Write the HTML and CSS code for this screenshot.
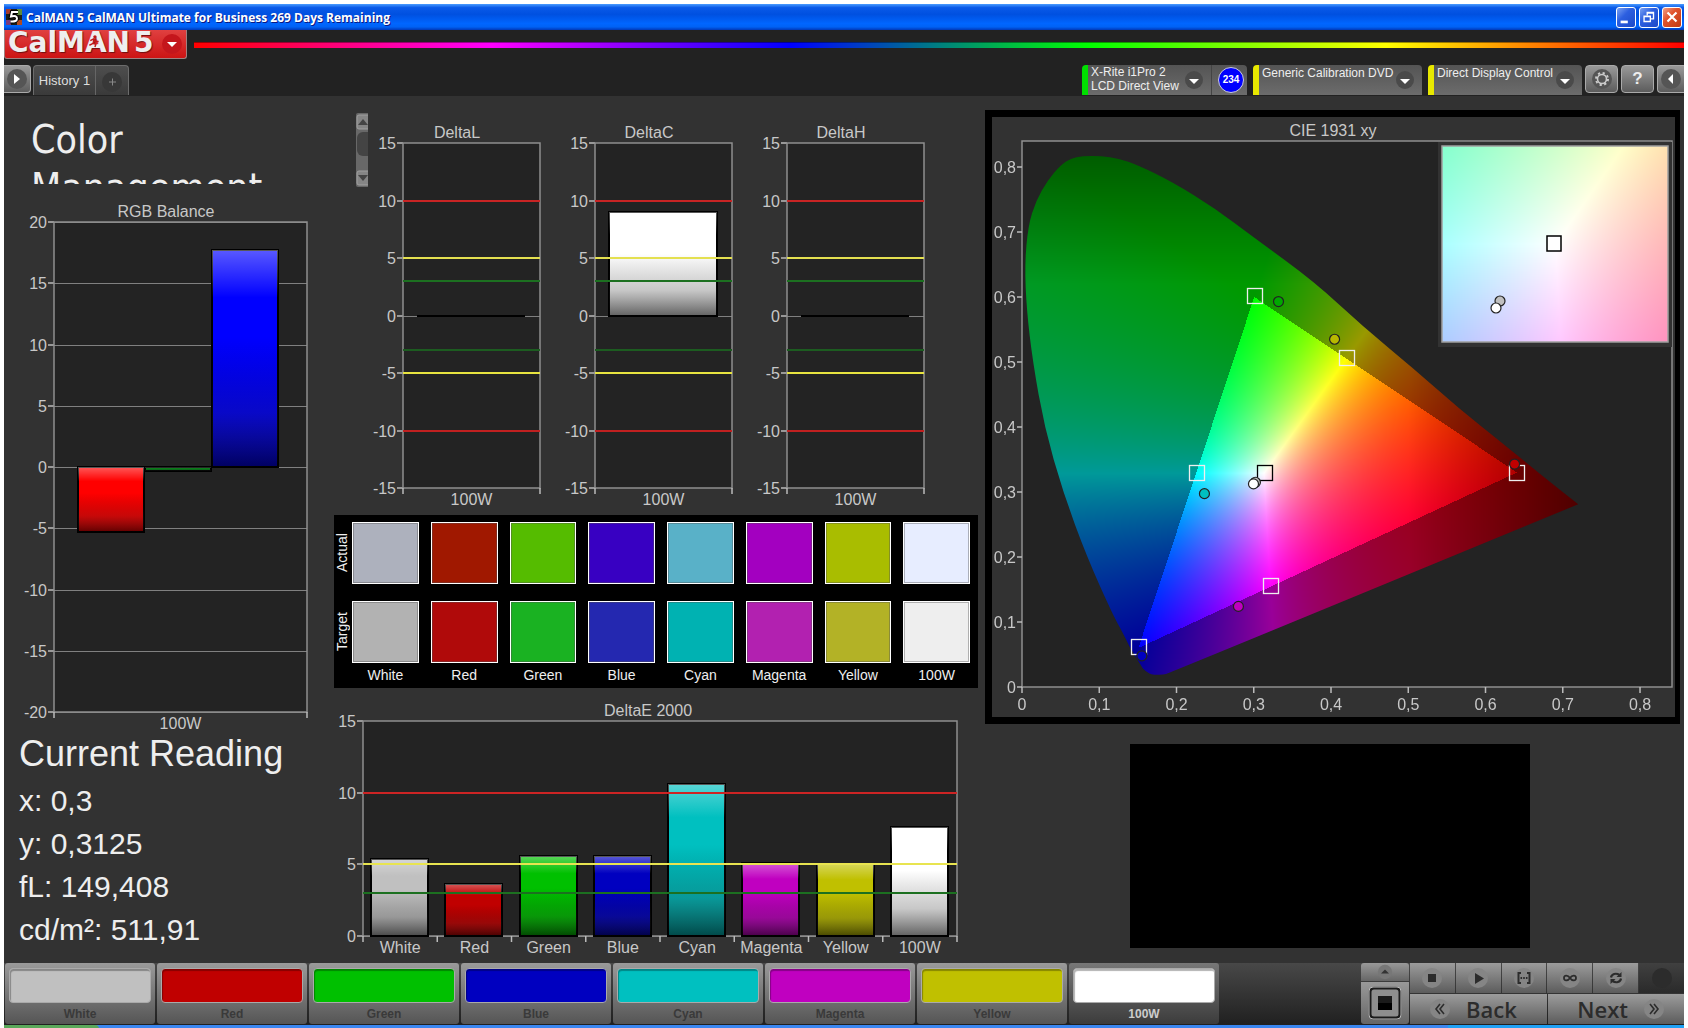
FILE: index.html
```html
<!DOCTYPE html>
<html lang="en">
<head>
    <meta charset="UTF-8">
    <meta name="viewport" content="width=device-width, initial-scale=1.0">
    <title>CalMAN 5</title>
    <link rel="stylesheet" href="styles.css">
</head>
<body>

    <div class="titlebar">
        <svg class="app-icon" viewBox="0 0 16 16">
            <rect width="16" height="16" fill="#1c1c14"/>
            <path d="M0 0h5v5H0z" fill="#a33a2a"/><path d="M11 0h5v6h-5z" fill="#5d8a3a"/>
            <path d="M0 11h5v5H0z" fill="#7a3a7a"/><path d="M11 11h5v5h-5z" fill="#b04a20"/>
            <path d="M12 3H6L5 7.500q6-1.500 6 2 0 3.500-6.500 3" fill="none" stroke="#000" stroke-width="4"/>
            <path d="M12 3H6L5 7.500q6-1.500 6 2 0 3.500-6.500 3" fill="none" stroke="#fff" stroke-width="2"/>
        </svg>
        <span class="title">CalMAN 5 CalMAN Ultimate for Business 269 Days Remaining</span>
        <button class="win-btn" aria-label="Minimize"><svg viewBox="0 0 20 20"><path d="M4 14h8v3H4z" fill="#fff"/></svg></button>
        <button class="win-btn" aria-label="Restore"><svg viewBox="0 0 20 20"><path d="M8 8V5h7v7h-3M8 5.500h7M4.500 9h7v6h-7zM4.500 9.500h7" fill="none" stroke="#fff" stroke-width="1.500"/></svg></button>
        <button class="win-btn close" aria-label="Close"><svg viewBox="0 0 20 20"><path d="M5 5l10 10M15 5L5 15" stroke="#fff" stroke-width="2.400"/></svg></button>
    </div>

    <header class="header">
        <div class="brand-row">
            <button class="logo">
                <span>CalMAN</span><span>5</span>
                <svg class="runner" viewBox="0 0 12 14"><circle cx="7" cy="2" r="1.800" fill="#c01818"/><path d="M2 6l4-2 2 3 3 0M6 5L5 9l3 1-1 3M5 9l-4 2" fill="none" stroke="#c01818" stroke-width="1.600"/></svg>
                <svg class="drop" viewBox="0 0 20 20"><circle cx="10" cy="10" r="10" fill="#c4161c"/><path d="M5 8h10l-5 5z" fill="#fff"/></svg>
            </button>
            <div class="spectrum"></div>
        </div>
        <div class="tab-row">
            <button class="square-btn left" aria-label="Expand"><svg viewBox="0 0 20 20"><circle cx="10" cy="10" r="10" fill="#555"/><path d="M7 5l6 5-6 5z" fill="#fff"/></svg></button>
            <div class="tabs">
                <button class="tab">History 1</button>
                <button class="tab add" aria-label="Add history"><svg viewBox="0 0 20 20"><circle cx="10" cy="10" r="10" fill="#383838"/><path d="M7 10h7M10.500 6.500v7" stroke="#888"/></svg></button>
            </div>
            <div class="device meter">
                <button class="device-name">X-Rite i1Pro 2<br>LCD Direct View
                    <svg viewBox="0 0 18 18"><circle cx="9" cy="9" r="9" fill="#4a4a4a"/><path d="M4 8h10l-5 5z" fill="#fff"/></svg></button>
                <span class="count">234</span>
            </div>
            <div class="device source">
                <button class="device-name">Generic Calibration DVD
                    <svg viewBox="0 0 18 18"><circle cx="9" cy="9" r="9" fill="#4a4a4a"/><path d="M4 8h10l-5 5z" fill="#fff"/></svg></button>
            </div>
            <div class="device display">
                <button class="device-name">Direct Display Control
                    <svg viewBox="0 0 18 18"><circle cx="9" cy="9" r="9" fill="#4a4a4a"/><path d="M4 8h10l-5 5z" fill="#fff"/></svg></button>
            </div>
            <button class="square-btn" aria-label="Settings"><svg viewBox="0 0 20 20"><circle cx="10" cy="10" r="10" fill="#555"/><circle cx="10" cy="10" r="4.500" fill="none" stroke="#ccc" stroke-width="1.600"/><circle cx="10" cy="10" r="6" fill="none" stroke="#ccc" stroke-width="2" stroke-dasharray="2.200 2.500"/></svg></button>
            <button class="square-btn help" aria-label="Help">?</button>
            <button class="square-btn right" aria-label="Collapse"><svg viewBox="0 0 20 20"><circle cx="10" cy="10" r="10" fill="#555"/><path d="M12 5l-5 5 5 5z" fill="#fff"/></svg></button>
        </div>
    </header>

    <main class="workspace">
        <section class="col-left">
            <h1 class="page-title">Color Management</h1>
            <svg class="chart" id="rgbBalance" viewBox="0 0 330 547"></svg>
            <div class="reading">
                <h2>Current Reading</h2>
                <p>x: 0,3</p>
                <p>y: 0,3125</p>
                <p>fL: 149,408</p>
                <p>cd/m²: 511,91</p>
            </div>
        </section>

        <section class="col-center">
            <div class="delta-row">
                <svg class="scrollbar" viewBox="0 0 12 74">
                    <rect width="16" height="74" rx="2" fill="#686868"/>
                    <rect x="1" y="2" width="14" height="14" rx="2" fill="#858585" stroke="#a0a0a0"/>
                    <path d="M2 12l5-6 5 6z" fill="#444"/>
                    <rect x="1" y="19" width="16" height="24" rx="6" fill="#444"/>
                    <rect x="1" y="58" width="14" height="14" rx="2" fill="#858585" stroke="#a0a0a0"/>
                    <path d="M2 62l5 6 5-6z" fill="#444"/>
                </svg>
                <svg class="chart" id="deltaL" viewBox="0 0 192 402"></svg>
                <svg class="chart" id="deltaC" viewBox="0 0 192 402"></svg>
                <svg class="chart" id="deltaH" viewBox="0 0 192 402"></svg>
            </div>

            <div class="swatches">
                <div class="swatch-row">
                    <span class="side">Actual</span>
                    <i style="background:#adb1bd"></i><i style="background:#a01800"></i><i style="background:#55bc00"></i><i style="background:#3800c2"></i>
                    <i style="background:#59b1c8"></i><i style="background:#a300c0"></i><i style="background:#a9bd00"></i><i style="background:#e7edff"></i>
                </div>
                <div class="swatch-row">
                    <span class="side">Target</span>
                    <i style="background:#b2b2b2"></i><i style="background:#b00a0a"></i><i style="background:#1ab222"></i><i style="background:#2428b0"></i>
                    <i style="background:#00b2b2"></i><i style="background:#b221b0"></i><i style="background:#b3b226"></i><i style="background:#eee"></i>
                </div>
                <div class="swatch-names">
                    <span></span><span>White</span><span>Red</span><span>Green</span><span>Blue</span><span>Cyan</span><span>Magenta</span><span>Yellow</span><span>100W</span>
                </div>
            </div>

            <svg class="chart delta-e" id="deltaE" viewBox="0 0 644 275"></svg>
        </section>

        <section class="col-right">
            <div class="cie-panel">
                <svg class="chart" viewBox="0 0 683 600">
                    <text x="341" y="19" text-anchor="middle">CIE 1931 xy</text>
                    <rect x="30" y="24" width="650" height="546" fill="#232323"/>
                    <foreignObject x="30" y="24" width="650" height="546"><canvas id="locus" width="650" height="546"></canvas></foreignObject>
                    <rect x="30" y="24" width="650" height="546" class="frame"/>
                    <g id="ciePlot"></g>
                    <rect x="446" y="25" width="234" height="205" fill="#323232"/>
                    <foreignObject x="450" y="29" width="226" height="196"><canvas id="inset" width="226" height="196"></canvas></foreignObject>
                    <rect x="450" y="29" width="226" height="196" fill="none" stroke="#a0a0a0" stroke-width="1.500"/>
                    <rect x="555" y="119" width="14" height="15" fill="#fff" stroke="#000" stroke-width="1.500"/>
                    <circle cx="508" cy="184" r="5" fill="#c0c0c0" stroke="#222" stroke-width="1.200"/>
                    <circle cx="504" cy="191" r="5" fill="#fff" stroke="#222" stroke-width="1.200"/>
                </svg>
            </div>
            <div class="preview"></div>
        </section>
    </main>

    <footer class="footer">
        <div class="patches">
            <button class="patch"><i style="background:#c0c0c0"></i>White</button>
            <button class="patch"><i style="background:#c00000"></i>Red</button>
            <button class="patch"><i style="background:#00c000"></i>Green</button>
            <button class="patch"><i style="background:#0000c0"></i>Blue</button>
            <button class="patch"><i style="background:#00c0c0"></i>Cyan</button>
            <button class="patch"><i style="background:#c000c0"></i>Magenta</button>
            <button class="patch"><i style="background:#c0c000"></i>Yellow</button>
            <button class="patch active"><i style="background:#fff"></i>100W</button>
        </div>
        <div class="window-ctl">
            <button class="up" aria-label="Show"><svg viewBox="0 0 20 20"><circle cx="10" cy="10" r="9" fill="#777"/><path d="M5 12l5-5 5 5z" fill="#333"/></svg></button>
            <button class="big" aria-label="Pattern window"><svg viewBox="0 0 34 34"><rect x="2" y="2" width="30" height="30" rx="4" fill="#8e8e8e" stroke="#1c1c1c" stroke-width="3"/><rect x="1" y="1" width="32" height="32" rx="4" fill="none" stroke="#bbb" stroke-width="1"/><rect x="10" y="10" width="14" height="7" fill="#1a1a1a"/><rect x="10" y="17" width="14" height="7" fill="#000"/></svg></button>
        </div>
        <div class="controls">
            <div class="small">
                <button aria-label="Stop"><svg viewBox="0 0 20 20"><circle cx="10" cy="10" r="10"/><path d="M6 6h8v8H6z" fill="#2c2c2c"/></svg></button>
                <button aria-label="Read"><svg viewBox="0 0 20 20"><circle cx="10" cy="10" r="10"/><path d="M7 5l9 5.500L7 16z" fill="#2c2c2c"/></svg></button>
                <button aria-label="Read series"><svg viewBox="0 0 20 20"><circle cx="10" cy="10" r="10"/><path d="M7 5H4.500v10H7M13 5h2.500v10H13" fill="none" stroke="#2c2c2c" stroke-width="2"/><path d="M6.500 10h7" stroke="#2c2c2c" stroke-width="2" stroke-dasharray="1.600 1.100"/></svg></button>
                <button aria-label="Read continuous"><svg viewBox="0 0 20 20"><circle cx="10" cy="10" r="10"/><path d="M10 10c-2-3-6-3.500-6 0s4 3 6 0 6-3.500 6 0-4 3-6 0z" fill="none" stroke="#2c2c2c" stroke-width="1.800"/></svg></button>
                <button aria-label="Refresh"><svg viewBox="0 0 20 20"><circle cx="10" cy="10" r="10"/><path d="M5 9.500C5.500 6 10 4.500 13.500 7M15 10.500C14.500 14 10 15.500 6.500 13" fill="none" stroke="#2c2c2c" stroke-width="2.200"/><path d="M15.500 4v5h-5zM4.500 16v-5h5z" fill="#2c2c2c"/></svg></button>
                <button class="off" aria-label="Record"><svg viewBox="0 0 20 20"><circle cx="10" cy="10" r="10"/></svg></button>
            </div>
            <div class="nav">
                <button><svg viewBox="0 0 20 20"><circle cx="10" cy="10" r="10"/><path d="M10 5l-4 5 4 5M14 5l-4 5 4 5" fill="none" stroke="#2c2c2c" stroke-width="1.600"/></svg>Back</button>
                <button class="next">Next<svg viewBox="0 0 20 20"><circle cx="10" cy="10" r="10"/><path d="M6 5l4 5-4 5M10 5l4 5-4 5" fill="none" stroke="#2c2c2c" stroke-width="1.600"/></svg></button>
            </div>
        </div>
    </footer>
    <div class="taskbar"><span class="start"></span><span class="tray"></span></div>

    <svg class="defs" width="0" height="0">
        <linearGradient id="shade" x1="0" y1="0" x2="0" y2="1">
            <stop offset="0" stop-color="#fff" stop-opacity=".35"/>
            <stop offset=".22" stop-color="#fff" stop-opacity="0"/>
            <stop offset=".4" stop-color="#000" stop-opacity="0"/>
            <stop offset=".75" stop-color="#222" stop-opacity=".25"/>
            <stop offset="1" stop-color="#000" stop-opacity=".62"/>
        </linearGradient>
    </svg>

    <script src="script.js"></script>
</body>
</html>
```
FILE: styles.css
```css
* {
    box-sizing: border-box;
}
body {
    margin: 0;
    padding: 4px 4px 0;
    min-height: 100vh;
    display: flex;
    flex-direction: column;
    background-color: #fff;
    font-family: "Liberation Sans", Arial, sans-serif;
    color: #eee;
}
button {
    border: none;
    padding: 0;
    margin: 0;
    color: inherit;
    font-family: inherit;
    cursor: pointer;
}
svg {
    display: block;
}
.defs {
    position: absolute;
}

/* title bar */
.titlebar {
    display: flex;
    align-items: center;
    gap: 3px;
    height: 26px;
    padding: 0 2px;
    background: linear-gradient(#4a9cff, #0a5ae8 14%, #0050e0 40%, #0066ff 75%, #0062f5 88%, #0038b8);
}
.app-icon {
    width: 16px;
    height: 16px;
}
.title {
    flex: 1;
    padding-left: 1px;
    font: bold 12px "Open Sans", sans-serif;
    color: #fff;
    text-shadow: 1px 1px 0 #0a1883;
    white-space: nowrap;
}
.win-btn {
    width: 20px;
    height: 21px;
    border: 1px solid #fff;
    border-radius: 3px;
    background: linear-gradient(135deg, #7ba2f2, #2c5fe0 40%, #1c49c8);
}
.win-btn.close {
    background: linear-gradient(135deg, #f0a088, #e0522c 40%, #c03a14);
}

/* header */
.header {
    background-color: #222;
}
.brand-row {
    display: flex;
    gap: 7px;
    height: 35px;
}
.logo {
    position: relative;
    display: flex;
    gap: 4px;
    width: 183px;
    height: 29px;
    padding-left: 3px;
    overflow: hidden;
    border: 1px solid #a08080;
    border-top: none;
    border-radius: 0 0 3px 3px;
    background: linear-gradient(#e04040, #cc1414);
    font: bold 28px/26px "DejaVu Sans", sans-serif;
    color: #eee;
    text-shadow: 1px 1px 1px #701010;
}
.runner {
    position: absolute;
    left: 83px;
    top: 5px;
    width: 12px;
    height: 13px;
}
.drop {
    width: 20px;
    height: 20px;
    margin: 4px 0 0 4px;
}
.spectrum {
    flex: 1;
    height: 6px;
    margin-top: 12px;
    background: linear-gradient(to right, #f00, #f0f 20%, #00f 40%, #0f0 60%, #ff0 80%, #f00);
    border-top: 1px solid rgba(0, 0, 0, .4);
}
.tab-row {
    display: flex;
    height: 31px;
}
.square-btn {
    display: flex;
    align-items: center;
    justify-content: center;
    width: 33px;
    height: 28px;
    margin-left: 3px;
    border: 1px solid #aaa;
    border-radius: 4px;
    background: linear-gradient(#999, #5c5c5c);
}
.square-btn svg {
    width: 20px;
    height: 20px;
}
.square-btn.left {
    width: 27px;
    margin-left: 0;
    border-left: none;
    border-radius: 0 4px 4px 0;
}
.square-btn.right {
    width: 27px;
    border-right: none;
    border-radius: 4px 0 0 4px;
}
.help {
    font-weight: bold;
    font-size: 17px;
}
.tabs {
    display: flex;
    height: 30px;
    margin: 0 auto 0 2px;
    border: 1px solid #6c6c6c;
    border-bottom: none;
    border-radius: 4px 4px 0 0;
    background: linear-gradient(#4e4e4e, #3a3a3a);
}
.tab {
    width: 62px;
    border-right: 1px solid #666;
    background: none;
    font-size: 13px;
    color: #ddd;
}
.tab.add {
    width: 32px;
    border: none;
}
.tab.add svg {
    width: 20px;
    margin: 3px auto 0;
}
.device {
    display: flex;
    width: 169px;
    height: 30px;
    margin-left: 6px;
    border-left: 6px solid #e8e800;
    border-radius: 4px 4px 0 0;
    background: linear-gradient(#545454, #6c6c6c);
}
.device.meter {
    width: 165px;
    border-left-color: #00e000;
}
.device.display {
    width: 154px;
}
.device-name {
    position: relative;
    flex: 1;
    display: block;
    height: 30px;
    padding: 0 0 2px 3px;
    background: none;
    font-size: 12px;
    line-height: 14px;
    text-align: left;
    white-space: nowrap;
}
.device:not(.meter) .device-name {
    padding-bottom: 15px;
}
.device.meter .device-name {
    border-right: 1px solid #444;
}
.device-name svg {
    position: absolute;
    right: 8px;
    top: 6px;
    width: 18px;
    height: 18px;
}
.count {
    width: 26px;
    height: 26px;
    margin: 2px 3px 0 6px;
    border: 1px solid #ccd;
    border-radius: 50%;
    background-color: #00f;
    font: bold 10px/24px "Liberation Sans", sans-serif;
    text-align: center;
    color: #fff;
}

/* work area */
.workspace {
    flex: 1;
    display: grid;
    grid-template-columns: 330fr 650fr 700fr;
    background-color: #323232;
}
.chart {
    width: 100%;
    font-size: 16px;
    fill: #c8c8c8;
}
.chart .frame {
    fill: none;
    stroke: #8f8f8f;
    stroke-width: 1.5;
}
.chart .tick {
    stroke: #bbb;
    stroke-width: 1.5;
}
.chart .grid {
    stroke: #808080;
}
.page-title {
    height: 68px;
    margin: 20px 0 0;
    padding-left: 27px;
    padding-right: 60px;
    overflow: hidden;
    font: 39px/48px "DejaVu Sans Condensed", "DejaVu Sans", sans-serif;
    font-stretch: condensed;
}
.reading {
    padding-left: 15px;
}
.reading h2 {
    margin: 0 0 2px;
    font-weight: normal;
    font-size: 36px;
    line-height: 46px;
}
.reading p {
    margin: 0;
    font-size: 30px;
    line-height: 43px;
}
.delta-row {
    display: grid;
    grid-template-columns: 12px 1fr 1fr 1fr;
    padding: 17px 40px 0 22px;
}
.swatches {
    margin-right: 6px;
    padding: 7px 8px 4px 0;
    background-color: #000;
    font-size: 14px;
}
.swatch-row, .swatch-names {
    display: grid;
    grid-template-columns: 6px repeat(8, 1fr);
    gap: 12px;
}
.swatch-row {
    height: 62px;
    margin-bottom: 17px;
}
.swatch-row:nth-child(2) {
    margin-bottom: 3px;
}
.swatch-row i {
    border: 1px solid #fff;
    box-shadow: inset 0 0 0 1px rgba(80, 80, 80, .4);
}
.side {
    writing-mode: vertical-rl;
    transform: rotate(180deg);
    width: 16px;
    text-align: center;
    line-height: 16px;
}
.swatch-names {
    line-height: 18px;
    text-align: center;
}
.delta-e {
    width: calc(100% - 6px);
}
.cie-panel {
    margin: 14px 4px 0 1px;
    border: 7px solid #000;
    border-right-width: 5px;
}
canvas {
    display: block;
    width: 100%;
    height: 100%;
}
.col-right {
    padding-right: 8px;
}
.cie-panel {
    margin-right: -4px;
}
.preview {
    width: 400px;
    height: 204px;
    margin: 20px auto 0;
    background-color: #000;
}

/* footer */
.footer {
    display: flex;
    height: 62px;
    background: linear-gradient(#484848, #202020);
}
.patches {
    flex: 1;
    display: flex;
    gap: 2px;
    padding-left: 1px;
}
.patch {
    display: flex;
    flex-direction: column;
    align-items: center;
    width: 150px;
    height: 61px;
    padding: 5px 4px 0;
    border-radius: 3px;
    background: linear-gradient(#9a9a9a, #555);
    font-weight: bold;
    font-size: 12px;
    line-height: 20px;
    color: #3a3a3a;
}
.patch i {
    width: 100%;
    height: 37px;
    margin-bottom: 1px;
    border: 1px solid #aaa;
    border-radius: 4px;
    box-shadow: inset 1px 2px 1px rgba(0, 0, 0, .3);
}
.patch.active {
    background: linear-gradient(#777, #3c3c3c);
    color: #ccc;
}
.window-ctl {
    width: 48px;
    margin-right: 1px;
}
.window-ctl button {
    display: flex;
    align-items: center;
    justify-content: center;
    width: 100%;
    background: linear-gradient(#999, #666);
}
.window-ctl .up {
    height: 18px;
    margin-bottom: 1px;
    border-radius: 3px 3px 0 0;
}
.up svg {
    width: 16px;
}
.big {
    height: 42px;
    border-radius: 0 0 3px 3px;
}
.big svg {
    width: 34px;
}
.controls {
    width: 274px;
}
.small, .nav {
    display: flex;
    gap: 1px;
    margin-bottom: 1px;
}
.small button, .nav button {
    flex: 1;
    display: flex;
    align-items: center;
    justify-content: center;
    height: 30px;
    background: linear-gradient(#9c9c9c, #5c5c5c);
}
.small svg, .nav svg {
    width: 20px;
    height: 20px;
    fill: #858585;
}
.small .off {
    background: linear-gradient(#404040, #2a2a2a);
}
.small .off svg {
    fill: #2c2c2c;
}
.nav button {
    justify-content: flex-start;
    gap: 16px;
    padding: 0 20px;
    font: 600 22px/28px "Open Sans", sans-serif;
    color: #2c2c2c;
}
.nav .next {
    justify-content: flex-end;
}
.taskbar {
    display: flex;
    justify-content: space-between;
    height: 4px;
    background-color: #3a86f0;
}
.start {
    width: 95px;
    background-color: #5aa85a;
    border-radius: 0 4px 0 0;
}
.tray {
    width: 236px;
    background-color: #1fa0f4;
}
```
FILE: script.js
```js
function tag(name, attrs, text) {
    var s = '<' + name;
    for (var k in attrs) s += ' ' + k + '="' + attrs[k] + '"';
    return s + '>' + (text === undefined ? '' : text) + '</' + name + '>';
}

function line(x1, y1, x2, y2, cls) {
    return tag('line', { x1: x1, y1: y1, x2: x2, y2: y2, 'class': cls });
}

// o: box [x, y, w, h], min, max, step, title, titleX, bars, limits, labels
function barChart(id, o) {
    var x = o.box[0], y = o.box[1], w = o.box[2], h = o.box[3];
    var out = tag('rect', { x: x, y: y, width: w, height: h, fill: '#232323' });
    function py(v) { return Math.round(y + h * (o.max - v) / (o.max - o.min)); }

    for (var v = o.min; v <= o.max; v += o.step) {
        if (o.grid || v === 0) out += line(x, py(v) + 0.5, x + w, py(v) + 0.5, 'grid');
        out += line(x - 6, py(v), x, py(v), 'tick');
        out += tag('text', { x: x - 7, y: py(v) + 6, 'text-anchor': 'end' }, v);
    }
    out += tag('rect', { x: x, y: y, width: w, height: h, 'class': 'frame' });

    o.bars.forEach(function (b) {
        // an empty bar still shows as a thin black line on the axis
        if (b.v === 0) {
            out += tag('line', { x1: x + b.x, y1: py(0), x2: x + b.x + b.w, y2: py(0), stroke: '#000', 'stroke-width': 2 });
            return;
        }
        var r = { x: x + b.x, y: Math.min(py(b.v), py(0)), width: b.w, height: Math.abs(py(b.v) - py(0)), fill: b.c, stroke: '#000', 'stroke-width': 2 };
        out += tag('rect', r);
        r.fill = 'url(#shade)';
        r.stroke = 'none';
        out += tag('rect', r);
    });

    (o.limits || []).forEach(function (l) {
        out += tag('line', { x1: x, y1: py(l[0]), x2: x + w, y2: py(l[0]), stroke: l[1], 'stroke-width': 2 });
    });

    var n = o.labels.length;
    for (var i = 0; i <= n; i++) {
        out += line(x + w * i / n, y + h, x + w * i / n, y + h + 6, 'tick');
        if (i < n) out += tag('text', { x: x + w * (i + 0.5) / n, y: y + h + 17, 'text-anchor': 'middle' }, o.labels[i]);
    }
    out += tag('text', { x: o.titleX, y: y - 5, 'text-anchor': 'middle' }, o.title);
    document.getElementById(id).innerHTML = out;
}

barChart('rgbBalance', {
    box: [50, 38, 253, 490], min: -20, max: 20, step: 5, grid: true,
    title: 'RGB Balance', titleX: 162, labels: ['100W'],
    bars: [
        { x: 24, w: 66, v: -5.3, c: '#f00' },
        { x: 91, w: 66, v: -0.3, c: '#0c7c1c' },
        { x: 158, w: 66, v: 17.7, c: '#00f' }
    ]
});

var deltaLimits = [[10, '#c82424'], [5, '#e4e050'], [3, '#1c7020'], [-3, '#1c5c20'], [-5, '#e8e440'], [-10, '#c02020']];
[['deltaL', 'DeltaL', 0], ['deltaC', 'DeltaC', 9], ['deltaH', 'DeltaH', 0]].forEach(function (d) {
    barChart(d[0], {
        box: [35, 30, 137, 345], min: -15, max: 15, step: 5,
        title: d[1], titleX: 89, labels: ['100W'], limits: deltaLimits,
        bars: [{ x: 14, w: 108, v: d[2], c: '#fff' }]
    });
});

var names = ['White', 'Red', 'Green', 'Blue', 'Cyan', 'Magenta', 'Yellow', '100W'];
var colors = ['#c0c0c0', '#c00000', '#00c000', '#0000c0', '#00c0c0', '#c000c0', '#c0c000', '#fff'];
var deltaE = [5.35, 3.65, 5.55, 5.55, 10.6, 5.12, 5.05, 7.6];
barChart('deltaE', {
    box: [29, 33, 594, 215], min: 0, max: 15, step: 5,
    title: 'DeltaE 2000', titleX: 314, labels: names,
    limits: [[10, '#cc2424'], [5, '#e8e450'], [3, '#1c7020']],
    bars: deltaE.map(function (v, i) {
        return { x: Math.round(8 + i * 74.25), w: 57, v: v, c: colors[i] };
    })
});

// chromaticity diagram, in xy units
var WX = 0.8414, WY = 0.84;
var locus = [[.150, .036], [.130, .085], [.118, .110], [.084, .2], [.053, .3], [.029, .4], [.014, .5], [.006, .58],
    [.0035, .65], [.008, .71], [.018, .748], [.033, .779], [.050, .803], [.063, .813], [.078, .817], [.103, .817], [.125, .813],
    [.150, .803], [.196, .776], [.249, .737], [.302, .690], [.378, .624], [.442, .554], [.506, .491],
    [.565, .429], [.623, .374], [.670, .328], [.720, .281], [.19, .021], [.183, .019], [.172, .0185], [.163, .021]];

function mix(x, y) {
    var X = x / y, Z = (1 - x - y) / y;
    var c = [3.2406 * X - 1.5372 - 0.4986 * Z, -0.9689 * X + 1.8758 + 0.0415 * Z, 0.0557 * X - 0.204 + 1.057 * Z];
    var m = Math.max(c[0], c[1], c[2]);
    return c.map(function (v) { return 255 * Math.max(v, 0) / m; });
}

function paint(id, x0, x1, y0, y1, dim) {
    var cv = document.getElementById(id), ctx = cv.getContext('2d');
    var img = ctx.createImageData(cv.width, cv.height), p = 0;
    for (var j = 0; j < cv.height; j++) {
        for (var i = 0; i < cv.width; i++) {
            var x = x0 + (x1 - x0) * i / cv.width, y = y1 - (y1 - y0) * (j + 0.5) / cv.height;
            var c = mix(x, y), f = 1;
            if (dim) {
                f -= Math.max(0, x - 0.5) * 2.2 + Math.max(0, y - 0.62) * 2;
                var out = (x - .15) * .54 - (y - .06) * .15 < 0 ||
                    (y - .6) * .34 + (x - .3) * .27 > 0 ||
                    (y - .06) * .49 - (x - .15) * .27 < 0;
                if (out) f *= 0.6;
            }
            img.data[p++] = c[0] * f;
            img.data[p++] = c[1] * f;
            img.data[p++] = c[2] * f;
            img.data[p++] = 255;
        }
    }
    ctx.putImageData(img, 0, 0);
    if (dim) {
        ctx.globalCompositeOperation = 'destination-in';
        ctx.beginPath();
        // curve through the midpoints keeps the outline smooth
        locus.forEach(function (q, k) {
            var n = locus[(k + 1) % locus.length];
            var ax = q[0] / WX * cv.width, ay = (1 - q[1] / WY) * cv.height;
            var mx = (q[0] + n[0]) / 2 / WX * cv.width, my = (1 - (q[1] + n[1]) / 2 / WY) * cv.height;
            if (k === 0) ctx.moveTo(mx, my);
            else if (q[0] === .72) { ctx.lineTo(ax, ay); ctx.lineTo(mx, my); }
            else ctx.quadraticCurveTo(ax, ay, mx, my);
        });
        ctx.closePath();
        ctx.fill();
    }
}
paint('locus', 0, WX, 0, WY, true);
paint('inset', 0.2877, 0.3377, 0.304, 0.354, false);

function cx(x) { return 30 + x * 650 / WX; }
function cy(y) { return 570 - y * 546 / WY; }

var g = '';
for (var t = 0; t <= 8; t++) {
    var label = t ? '0,' + t : '0';
    g += line(cx(t / 10), 570, cx(t / 10), 576, 'tick');
    g += tag('text', { x: cx(t / 10), y: 593, 'text-anchor': 'middle' }, label);
    g += line(25, cy(t / 10), 30, cy(t / 10), 'tick');
    g += tag('text', { x: 24, y: cy(t / 10) + 6, 'text-anchor': 'end' }, label);
}
[[.3, .601], [.64, .33], [.15, .062], [.42, .506], [.3205, .155], [.225, .33], [.3135, .33]].forEach(function (q, i) {
    g += tag('rect', { x: Math.round(cx(q[0])) - 6.5, y: Math.round(cy(q[1])) - 7.5, width: 15, height: 15, fill: 'none', stroke: i === 6 ? '#000' : '#eee', 'stroke-width': 1.3 });
});
[[.3314, .593, '#00a800'], [.404, .535, '#b8b800'], [.637, .343, '#c00000'], [.2355, .2975, '#00c0c0'],
    [.2795, .124, '#c000c0'], [.1545, .048, '#0000c0'], [.3015, .315, '#c0c0c0'], [.299, .3125, '#fff']].forEach(function (q) {
    g += tag('circle', { cx: cx(q[0]) + 0.5, cy: cy(q[1]), r: 5, fill: q[2], stroke: '#222', 'stroke-width': 1.2 });
});
document.getElementById('ciePlot').innerHTML = g;
```
